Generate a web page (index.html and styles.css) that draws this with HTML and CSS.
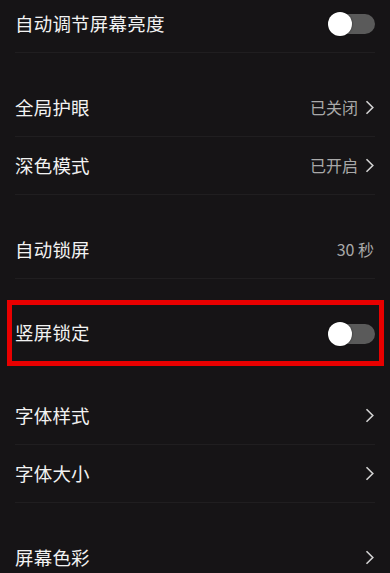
FILE: index.html
```html
<!DOCTYPE html>
<html lang="zh-CN">
<head>
<meta charset="utf-8">
<title>显示设置</title>
<link rel="stylesheet" href="styles.css">
</head>
<body>
<main class="page">
  <section class="group group-first">
    <div class="row">
      <span class="label">自动调节屏幕亮度</span>
      <span class="toggle"><span class="knob"></span></span>
    </div>
  </section>

  <section class="group">
    <div class="row">
      <span class="label">全局护眼</span>
      <span class="right"><span class="value">已关闭</span><svg class="chev" width="9" height="15" viewBox="0 0 9 15"><polyline points="1.5,1.2 7.8,7.5 1.5,13.8" fill="none" stroke="#d2d2d2" stroke-width="1.6"/></svg></span>
    </div>
    <div class="row">
      <span class="label">深色模式</span>
      <span class="right"><span class="value">已开启</span><svg class="chev" width="9" height="15" viewBox="0 0 9 15"><polyline points="1.5,1.2 7.8,7.5 1.5,13.8" fill="none" stroke="#d2d2d2" stroke-width="1.6"/></svg></span>
    </div>
  </section>

  <section class="group">
    <div class="row">
      <span class="label">自动锁屏</span>
      <span class="right"><span class="value value-plain">30 秒</span></span>
    </div>
  </section>

  <section class="group group-marked">
    <div class="row row-marked">
      <span class="label">竖屏锁定</span>
      <span class="toggle"><span class="knob"></span></span>
    </div>
  </section>

  <section class="group">
    <div class="row">
      <span class="label">字体样式</span>
      <span class="right"><svg class="chev" width="9" height="15" viewBox="0 0 9 15"><polyline points="1.5,1.2 7.8,7.5 1.5,13.8" fill="none" stroke="#d2d2d2" stroke-width="1.6"/></svg></span>
    </div>
    <div class="row">
      <span class="label">字体大小</span>
      <span class="right"><svg class="chev" width="9" height="15" viewBox="0 0 9 15"><polyline points="1.5,1.2 7.8,7.5 1.5,13.8" fill="none" stroke="#d2d2d2" stroke-width="1.6"/></svg></span>
    </div>
  </section>

  <section class="group">
    <div class="row">
      <span class="label">屏幕色彩</span>
      <span class="right"><svg class="chev" width="9" height="15" viewBox="0 0 9 15"><polyline points="1.5,1.2 7.8,7.5 1.5,13.8" fill="none" stroke="#d2d2d2" stroke-width="1.6"/></svg></span>
    </div>
  </section>
</main>
</body>
</html>
```

FILE: styles.css
```css
html, body {
  margin: 0;
  padding: 0;
  background: #161416;
  height: 100%;
  overflow: hidden;
}

body {
  font-family: "Noto Sans CJK SC", "Noto Sans", sans-serif;
  color: #f2f2f2;
}

.page {
  display: flex;
  flex-direction: column;
}

.group {
  margin-top: 26px;
}

.group-first {
  margin-top: -5px;
}

.row {
  box-sizing: border-box;
  height: 58px;
  margin: 0 15px;
  border-bottom: 1px solid #201e20;
  display: flex;
  align-items: center;
  justify-content: space-between;
}

.label {
  font-size: 18.5px;
  line-height: 24px;
  margin-top: -2px;
  letter-spacing: 0.2px;
}

.right {
  display: flex;
  align-items: center;
  gap: 7px;
}

.value {
  font-size: 16px;
  line-height: 22px;
  color: #a9a9a9;
  margin-top: -2px;
}

.value-plain {
  margin-right: 1px;
}

.chev {
  display: block;
  margin-right: 1px;
}

.toggle {
  position: relative;
  width: 46px;
  height: 20px;
  border-radius: 10px;
  background: #5a5a5a;
  margin-top: 1px;
}

.knob {
  position: absolute;
  left: -1px;
  top: -2px;
  width: 24px;
  height: 24px;
  border-radius: 50%;
  background: #ffffff;
  box-shadow: 0 0 2px rgba(0, 0, 0, 0.6);
}

.group-marked {
  margin: 21px 6px -5px 7px;
  border: 5px solid #e80000;
}

.row-marked {
  height: 56px;
  margin: 0 4px 0 3px;
  border-bottom: none;
}
```
